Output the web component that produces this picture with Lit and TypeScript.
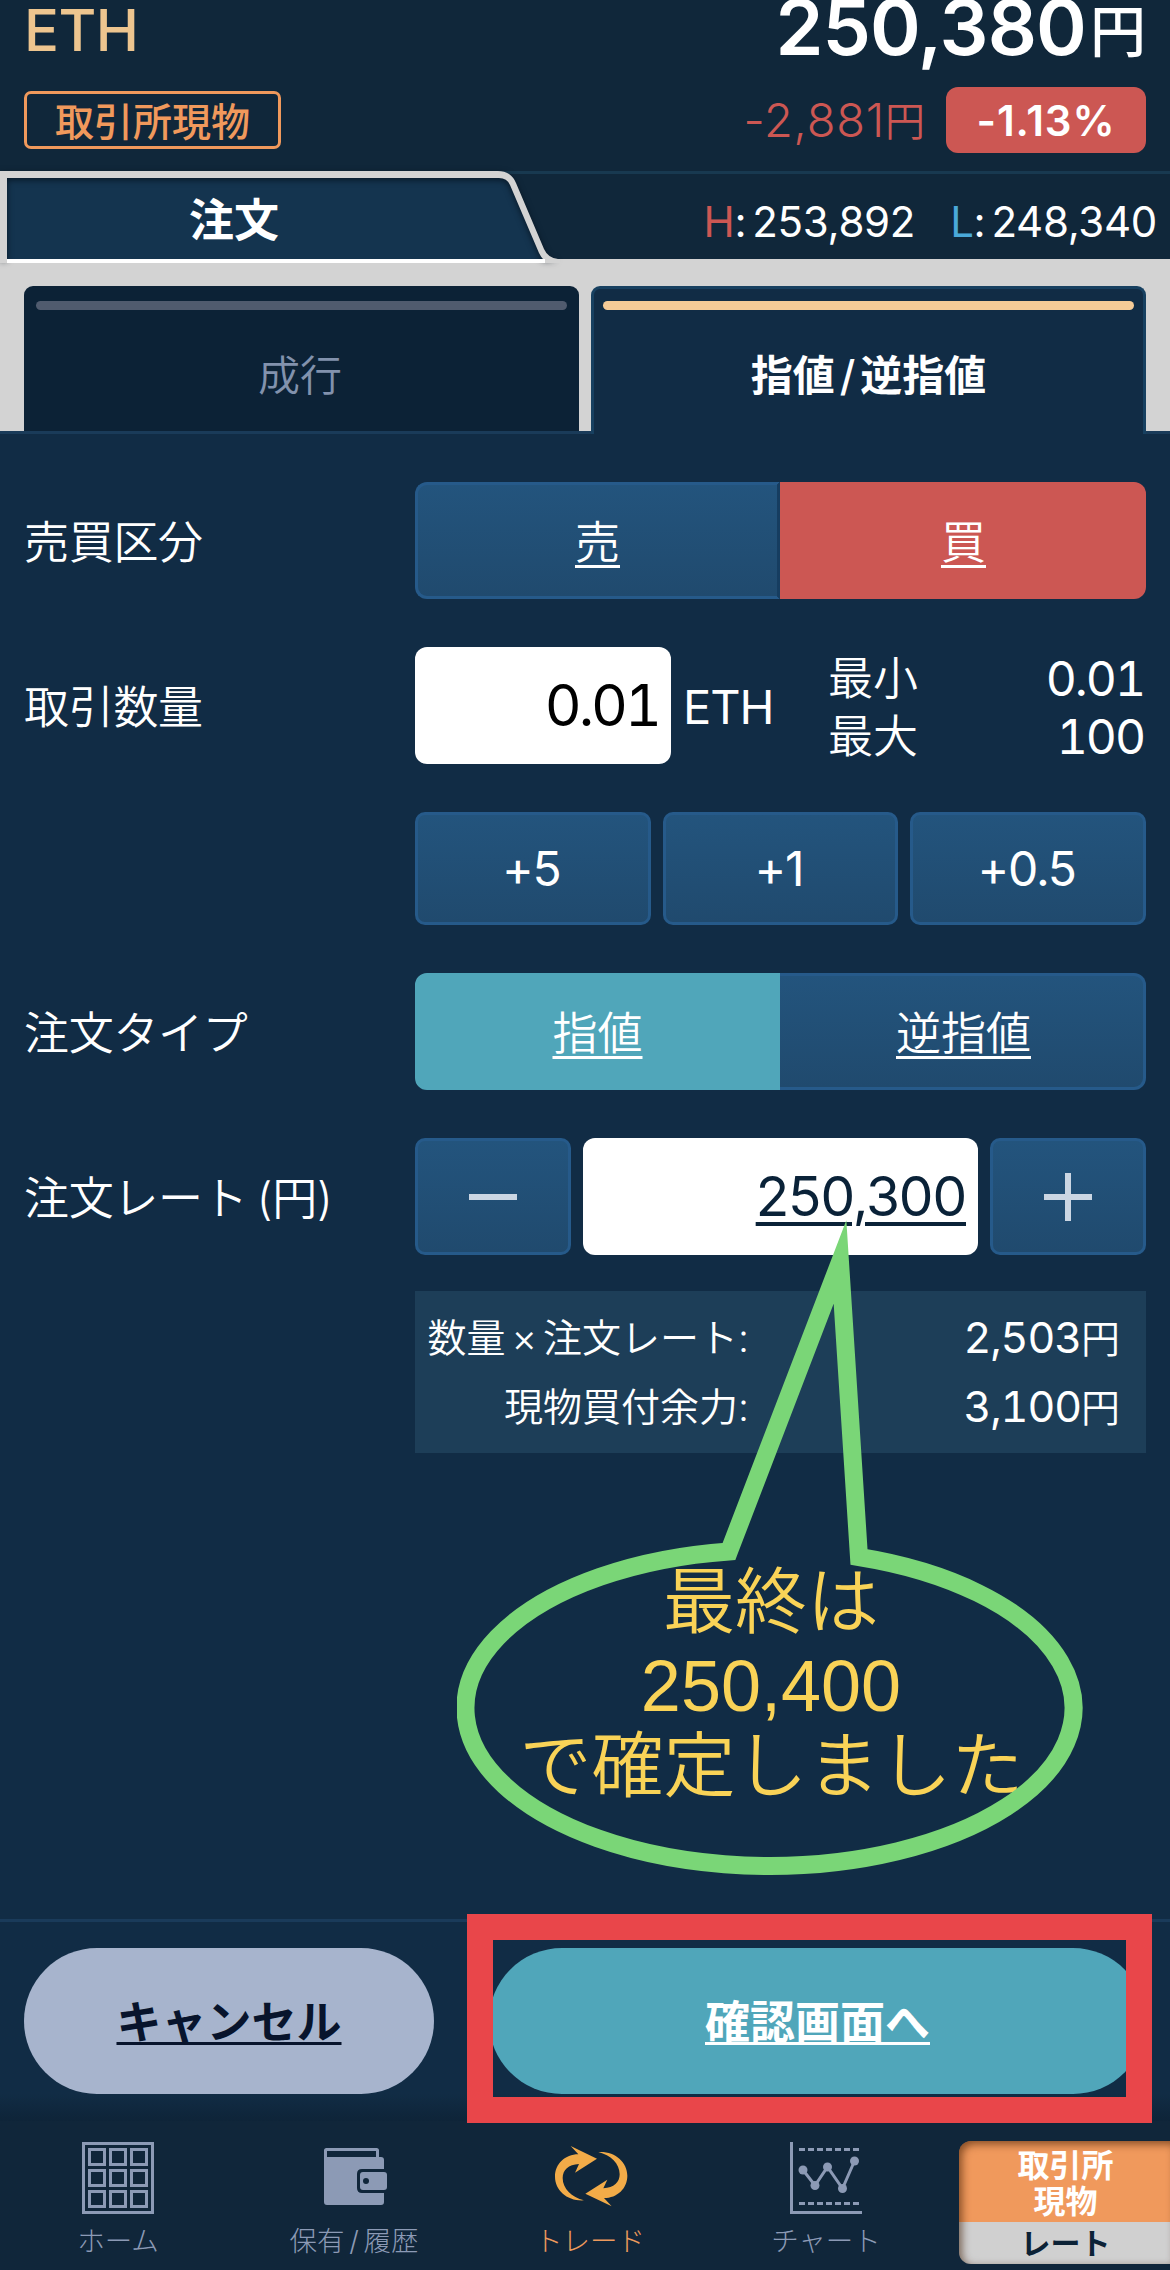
import { LitElement, html, css, svg } from "lit";
import { customElement, property } from "lit/decorators.js";

const HOME_CELLS = [6, 27, 48];
const CHART_POINTS: [number, number][] = [
  [13, 28],
  [25, 43.5],
  [37.5, 25],
  [52.5, 46.5],
  [64.5, 19],
];
const ARROW =
  "M92 54L171 92L105 134L117 108C85 110 68 126 68 150C68 182 95 208 132 217C82 220 45 187 45 146C45 108 75 79 115 79Z";

const homeIcon = html`<svg width="72" height="72" viewBox="0 0 72 72" fill="none" stroke="#8c9ab5" stroke-width="3">
  <rect x="1.5" y="1.5" width="69" height="69" />
  ${HOME_CELLS.map((y) => HOME_CELLS.map((x) => svg`<rect x=${x + 1.5} y=${y + 1.5} width="15" height="15" />`))}
</svg>`;

const walletIcon = html`<svg width="72" height="72" viewBox="0 0 72 72">
  <path d="M7.500 18V8.500q0-1 1-1H58.500q1 0 1 1V18" fill="none" stroke="#8c9ab5" stroke-width="3" />
  <path fill="#8c9ab5" d="M6 15H63q3 0 3 3V27H44q-5 0-5 5V46q0 5 5 5H66V60q0 3-3 3H9q-3 0-3-3Z" />
  <rect x="42" y="30" width="27" height="18" rx="3" fill="#8c9ab5" />
  <circle cx="48" cy="39" r="3" fill="#10263a" />
</svg>`;

const tradeIcon = html`<svg width="100" height="100" viewBox="0 0 300 300" fill="#f2ab48">
  <path d=${ARROW} />
  <path transform="rotate(180 153.5 144.5)" d=${ARROW} />
</svg>`;

const chartIcon = html`<svg width="72" height="72" viewBox="0 0 72 72" fill="none" stroke="#8c9ab5" stroke-width="3">
  <path d="M1.500 0V70.500H72" />
  <path d="M9 7.500H69M9 61.500H69" stroke-dasharray="6 3" />
  <polyline points=${CHART_POINTS.map((p) => p.join(",")).join(" ")} />
  ${CHART_POINTS.map(([x, y]) => svg`<circle cx=${x} cy=${y} r="4.5" fill="#8c9ab5" stroke="none" />`)}
</svg>`;

const fontStack = css`"Inter", "Noto Sans CJK JP", sans-serif`;

@customElement("price-header")
class PriceHeader extends LitElement {
  static styles = css`
    :host {
      display: flex;
      justify-content: space-between;
      height: 171px;
      box-sizing: border-box;
      padding: 0 24px;
      background: #10273a;
      font-family: ${fontStack};
    }
    .left,
    .right {
      display: flex;
      flex-direction: column;
    }
    .right {
      align-items: flex-end;
    }
    .symbol {
      height: 91px;
      line-height: 60px;
      font-size: 58px;
      font-weight: 550;
      color: #edc58f;
      letter-spacing: -0.5px;
    }
    .market {
      box-sizing: border-box;
      width: 257px;
      height: 58px;
      padding-bottom: 2px;
      border: 3px solid #f0995c;
      border-radius: 7px;
      display: flex;
      align-items: center;
      justify-content: center;
      font-size: 39px;
      font-weight: 500;
      color: #f0995c;
    }
    .price {
      height: 87px;
      line-height: 55px;
      font-size: 77px;
      font-weight: 600;
      color: #fff;
      letter-spacing: -0.9px;
      white-space: nowrap;
    }
    .price .yen {
      position: relative;
      top: -3px;
      font-size: 56px;
      font-weight: 500;
      letter-spacing: 0;
      margin-left: 4px;
    }
    .change {
      display: flex;
      align-items: center;
      height: 66px;
      gap: 21px;
    }
    .diff {
      font-size: 47px;
      font-weight: 350;
      color: #cc5753;
      letter-spacing: 0.8px;
    }
    .diff .yen {
      position: relative;
      top: -1px;
      font-size: 40px;
      letter-spacing: 0;
    }
    .pct {
      width: 200px;
      height: 66px;
      border-radius: 12px;
      background: #cc5753;
      color: #fff;
      font-size: 42px;
      font-weight: 600;
      letter-spacing: 0.9px;
      line-height: 67px;
      text-align: center;
    }
  `;
  render() {
    return html`
      <div class="left">
        <div class="symbol">ETH</div>
        <div class="market">取引所現物</div>
      </div>
      <div class="right">
        <div class="price">250,380<span class="yen">円</span></div>
        <div class="change">
          <div class="diff">-2,881<span class="yen">円</span></div>
          <div class="pct">-1.13%</div>
        </div>
      </div>
    `;
  }
}

@customElement("order-tabs")
class OrderTabs extends LitElement {
  static styles = css`
    :host {
      display: block;
      font-family: ${fontStack};
      background: #d3d3d3;
    }
    .strip {
      display: flex;
      justify-content: space-between;
      height: 88px;
      background: #10273a;
      box-shadow: inset 0 3px #183950;
    }
    .main {
      display: grid;
      width: 560px;
      height: 88px;
    }
    .main > * {
      grid-area: 1 / 1;
    }
    .main svg {
      overflow: visible;
    }
    .frame {
      filter: drop-shadow(0 2px 3px rgba(0, 10, 20, 0.7));
    }
    .name {
      width: 468px;
      line-height: 99px;
      text-align: center;
      font-size: 45px;
      font-weight: 700;
      color: #fff;
      z-index: 1;
    }
    .range {
      display: flex;
      align-items: center;
      padding: 13px 13px 0 0;
      font-size: 42px;
      color: #fff;
      letter-spacing: -0.3px;
      white-space: pre;
    }
    .h {
      color: #cc5753;
    }
    .l {
      color: #4aa9d9;
      margin-left: 35px;
    }
    .v {
      margin-left: 6px;
    }
    .kinds {
      display: grid;
      grid-template-columns: 555px 555px;
      gap: 12px;
      padding: 27px 24px 0;
      height: 148px;
      box-shadow: inset 0 -3px #1a3b59;
    }
    .kind {
      box-sizing: border-box;
      height: 145px;
      border-radius: 9px 9px 0 0;
      background: #0c2236;
      padding: 15px 12px 0;
      text-align: center;
      font-size: 42px;
      font-weight: 350;
      color: #8292ad;
    }
    .kind::before {
      content: "";
      display: block;
      height: 9px;
      border-radius: 5px;
      background: #505b6e;
      margin-bottom: 36px;
    }
    .kind > span {
      display: block;
      line-height: 60px;
      padding-right: 3px;
    }
    .active {
      height: 148px;
      border: 3px solid #174060;
      border-bottom: 0;
      padding: 12px 9px 0;
      background: #112c45;
      color: #fff;
      font-weight: 700;
    }
    .active > span {
      padding-right: 0;
    }
    .active::before {
      background: #f5cb97;
    }
    .slash {
      margin: 0 5px;
      font-weight: 500;
    }
  `;
  render() {
    return html`
      <div class="strip">
        <div class="main">
          <svg width="560" height="92" viewBox="0 0 560 92">
            <path d="M7 7H501Q508 7 511 14L543 88H7Z" fill="#14344f" />
            <path
              class="frame"
              d="M0 0H498Q511 0 516 12L544 78Q548 87 558 88H543Q541 86 539 82L510 14Q507 7 499 7H7V88H0Z"
              fill="#d3d3d3"
            />
            <path d="M0 88H560V92H0Z" fill="#d3d3d3" />
            <path d="M7 88H545V92H7Z" fill="#fff" />
          </svg>
          <div class="name">注文</div>
        </div>
        <div class="range"><span class="h">H</span>:<span class="v">253,892</span><span class="l">L</span>:<span class="v">248,340</span></div>
      </div>
      <div class="kinds">
        <div class="kind"><span>成行</span></div>
        <div class="kind active"><span>指値<span class="slash">/</span>逆指値</span></div>
      </div>
    `;
  }
}

@customElement("order-form")
class OrderForm extends LitElement {
  static styles = css`
    :host {
      display: flex;
      flex-direction: column;
      gap: 48px;
      height: 1485px;
      box-sizing: border-box;
      padding: 48px 24px 0;
      background: #112c45;
      color: #fff;
      font-family: ${fontStack};
      font-size: 45px;
      font-weight: 350;
    }
    .row {
      display: grid;
      grid-template-columns: 391px 731px;
      align-items: center;
      white-space: nowrap;
    }
    .label {
      padding-bottom: 3px;
      letter-spacing: -0.3px;
      word-spacing: -3px;
    }
    .field {
      grid-column: 2;
      display: flex;
      align-items: center;
      gap: 12px;
    }
    .btn {
      box-sizing: border-box;
      height: 117px;
      flex: 1;
      display: flex;
      align-items: center;
      justify-content: center;
      border: 3px solid #265a8a;
      border-radius: 10px;
      background: linear-gradient(#23547d, #204a6e);
    }
    .add .btn {
      height: 113px;
      padding-right: 3px;
      font-size: 48px;
      font-weight: 400;
      letter-spacing: -1.2px;
    }
    .seg {
      gap: 0;
    }
    .seg .btn {
      padding-bottom: 3px;
      text-decoration: underline;
      text-decoration-thickness: 3px;
      text-underline-offset: 6px;
      text-decoration-skip-ink: none;
    }
    .seg .btn:first-child {
      flex: 0 0 365px;
      border-radius: 12px 0 0 12px;
      border-right: 3px solid #163d60;
    }
    .seg .btn:last-child {
      border-radius: 0 12px 12px 0;
      border-left: 0;
      padding-left: 4px;
    }
    .seg .buy {
      background: #cc5753;
      border-color: #cc5753;
    }
    .seg .btn.limit {
      background: #50a6ba;
      border-color: #50a6ba;
    }
    .input {
      box-sizing: border-box;
      height: 117px;
      border-radius: 12px;
      background: #fff;
      color: #000;
      text-align: right;
      line-height: 117px;
      font-weight: 400;
    }
    .qty {
      width: 256px;
      padding-right: 12px;
      font-size: 57px;
      letter-spacing: -3px;
      font-feature-settings: "tnum";
    }
    .unit {
      font-size: 47px;
      font-weight: 400;
      letter-spacing: -1px;
      width: 133px;
      padding-top: 1px;
    }
    .limits {
      flex: 1;
      display: grid;
      grid-template-columns: auto auto;
      justify-content: space-between;
      line-height: 58px;
      margin: 2px 0 -2px;
    }
    .limits .n {
      text-align: right;
      font-size: 48px;
      font-weight: 400;
      font-feature-settings: "tnum";
      letter-spacing: -2px;
      padding-right: 2px;
    }
    .rate {
      width: 395px;
      padding-right: 12px;
      font-size: 55px;
      color: #0a2238;
      letter-spacing: -1.1px;
      text-decoration: underline;
      text-decoration-thickness: 4px;
      text-underline-offset: 6px;
    }
    .summary {
      box-sizing: border-box;
      width: 731px;
      height: 162px;
      margin: -12px 0 0 391px;
      padding: 12px 26px 0 12px;
      display: grid;
      grid-template-columns: 322px 1fr;
      grid-auto-rows: 69px;
      line-height: 69px;
      text-align: right;
      background: #1d3e58;
      font-size: 39px;
      word-spacing: -5px;
      white-space: nowrap;
    }
    .summary .n {
      font-size: 43px;
      font-weight: 400;
      font-feature-settings: "tnum";
      letter-spacing: -1.1px;
    }
    .summary .yen {
      font-size: 39px;
      font-weight: 350;
      letter-spacing: 0;
    }
  `;
  render() {
    return html`
      <div class="row">
        <div class="label">売買区分</div>
        <div class="field seg"><div class="btn">売</div><div class="btn buy">買</div></div>
      </div>
      <div class="row">
        <div class="label">取引数量</div>
        <div class="field">
          <div class="input qty">0.01</div>
          <div class="unit">ETH</div>
          <div class="limits">
            <span>最小</span><span class="n">0.01</span>
            <span>最大</span><span class="n">100</span>
          </div>
        </div>
      </div>
      <div class="row">
        <div class="field add">
          <div class="btn">+5</div>
          <div class="btn">+1</div>
          <div class="btn">+0.5</div>
        </div>
      </div>
      <div class="row">
        <div class="label">注文タイプ</div>
        <div class="field seg"><div class="btn limit">指値</div><div class="btn">逆指値</div></div>
      </div>
      <div class="row">
        <div class="label">注文レート (円)</div>
        <div class="field">
          <div class="btn">
            <svg width="48" height="48" viewBox="0 0 48 48"><path d="M0 24H48" stroke="#cbd6e3" stroke-width="6" /></svg>
          </div>
          <div class="input rate">250,300</div>
          <div class="btn">
            <svg width="48" height="48" viewBox="0 0 48 48"><path d="M0 24H48M24 0V48" stroke="#cbd6e3" stroke-width="6" /></svg>
          </div>
        </div>
      </div>
      <div class="summary">
        <span>数量 × 注文レート:</span><span class="n">2,503<span class="yen">円</span></span>
        <span>現物買付余力:</span><span class="n">3,100<span class="yen">円</span></span>
      </div>
    `;
  }
}

@customElement("speech-balloon")
class SpeechBalloon extends LitElement {
  static styles = css`
    :host {
      position: absolute;
      left: 457px;
      top: 1215px;
      width: 626px;
      height: 662px;
    }
    svg {
      display: block;
    }
    text {
      font-family: "Liberation Sans", "Noto Sans CJK JP", sans-serif;
      font-size: 72px;
      font-weight: 350;
      fill: #f9d357;
      text-anchor: middle;
    }
  `;
  render() {
    return html`<svg width="626" height="662" viewBox="457 1215 626 662">
      <text x="771" y="1627">最終は</text>
      <text x="771" y="1711">250,400</text>
      <text x="771.5" y="1791">で確定しました</text>
      <path
        d="M729 1551.400L840 1262L859 1557A304 158 0 1 1 729 1551.400Z"
        fill="none"
        stroke="#7ad677"
        stroke-width="18"
        stroke-miterlimit="10"
      />
    </svg>`;
  }
}

@customElement("order-actions")
class OrderActions extends LitElement {
  static styles = css`
    :host {
      display: flex;
      gap: 55px;
      height: 202px;
      box-sizing: border-box;
      padding: 26px 24px 0;
      border-top: 3px solid #1a3b5a;
      background: linear-gradient(#112c45 155px, #112c45 172px, #0e2438);
      font-family: ${fontStack};
    }
    .pill {
      height: 146px;
      border-radius: 73px;
      line-height: 149px;
      text-align: center;
      font-size: 45px;
      font-weight: 700;
      text-decoration: underline;
      text-decoration-thickness: 3px;
      text-underline-offset: 3px;
      text-decoration-skip-ink: none;
    }
    .cancel {
      width: 410px;
      background: #a7b4cd;
      color: #08142c;
    }
    .confirm {
      width: 657px;
      background: #50a6ba;
      color: #fff;
    }
  `;
  render() {
    return html`<div class="pill cancel">キャンセル</div>
      <div class="pill confirm">確認画面へ</div>`;
  }
}

@customElement("nav-item")
class NavItem extends LitElement {
  @property() label = "";
  @property({ type: Boolean }) active = false;
  static styles = css`
    :host {
      flex: none;
      width: 236px;
      display: flex;
      flex-direction: column;
      align-items: center;
      font-family: ${fontStack};
      font-size: 27.5px;
      font-weight: 300;
      color: #8c9ab5;
    }
    :host([active]) {
      color: #ee9a5c;
    }
    .icon {
      height: 72px;
      display: flex;
      align-items: center;
      justify-content: center;
      margin: 21px 0 11px;
    }
    .label {
      line-height: 33px;
      white-space: nowrap;
      word-spacing: -3px;
    }
  `;
  render() {
    return html`<div class="icon"><slot></slot></div>
      <div class="label">${this.label}</div>`;
  }
}

@customElement("bottom-nav")
class BottomNav extends LitElement {
  static styles = css`
    :host {
      display: flex;
      height: 149px;
      background: #10263a;
      overflow: hidden;
      font-family: ${fontStack};
    }
    svg {
      flex: none;
    }
    .switch {
      flex: none;
      margin: 20px 0 0 15px;
      width: 213px;
      height: 123px;
      border-radius: 12px 0 0 12px;
      background: linear-gradient(#f0995c 81px, #d0d0d0 81px);
      box-shadow: inset 3px 3px 9px rgba(60, 25, 0, 0.6);
      text-align: center;
      font-size: 32px;
      font-weight: 700;
      color: #fff;
      line-height: 35.5px;
    }
    .market {
      box-sizing: border-box;
      height: 81px;
      padding-top: 7px;
    }
    .rate {
      line-height: 42px;
      font-size: 30px;
      font-weight: 600;
      color: #0c2236;
    }
  `;
  render() {
    return html`
      <nav-item label="ホーム">${homeIcon}</nav-item>
      <nav-item label="保有 / 履歴">${walletIcon}</nav-item>
      <nav-item label="トレード" active>${tradeIcon}</nav-item>
      <nav-item label="チャート">${chartIcon}</nav-item>
      <div class="switch">
        <div class="market">取引所<br />現物</div>
        <div class="rate">レート</div>
      </div>
    `;
  }
}

@customElement("app-root")
class AppRoot extends LitElement {
  static styles = css`
    :host {
      display: block;
      position: relative;
      width: 1170px;
      height: 2270px;
      overflow: hidden;
      background: #112c45;
    }
    .highlight {
      position: absolute;
      left: 467px;
      top: 1914px;
      width: 685px;
      height: 209px;
      box-sizing: border-box;
      border: 26px solid #e9464a;
    }
  `;
  render() {
    return html`
      <price-header></price-header>
      <order-tabs></order-tabs>
      <order-form></order-form>
      <order-actions></order-actions>
      <bottom-nav></bottom-nav>
      <speech-balloon></speech-balloon>
      <div class="highlight"></div>
    `;
  }
}
